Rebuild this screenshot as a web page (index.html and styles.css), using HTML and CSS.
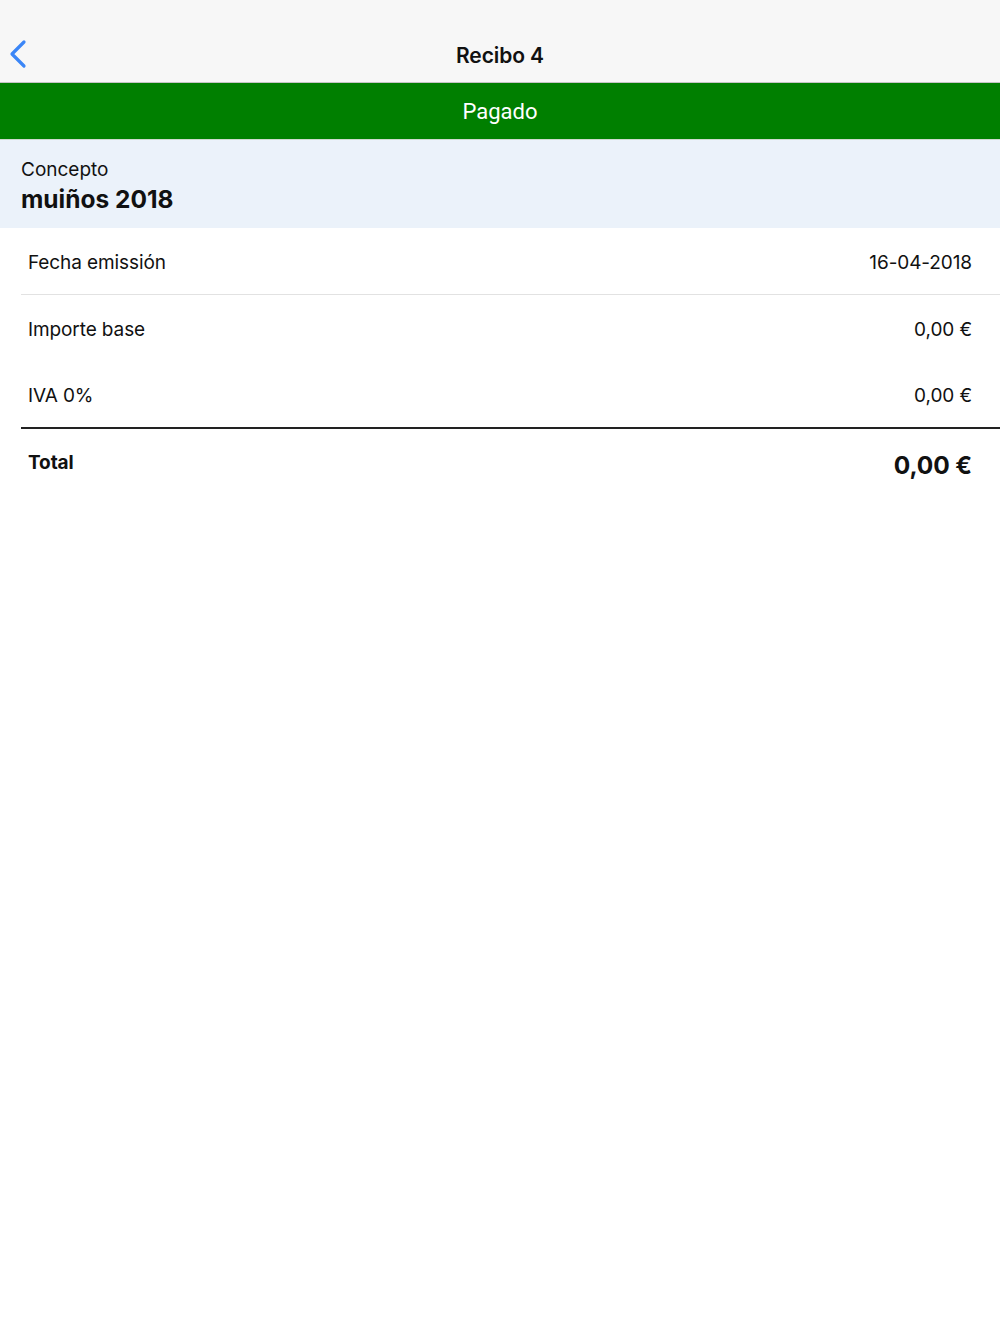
FILE: index.html
```html
<!DOCTYPE html>
<html lang="es">
<head>
    <meta charset="UTF-8">
    <meta name="viewport" content="width=device-width, initial-scale=1.0">
    <title>Recibo 4</title>
    <link rel="stylesheet" href="styles.css">
</head>
<body>
    <header class="navbar">
        <button class="back-btn" aria-label="Volver">
            <svg width="20" height="30" viewBox="0 0 20 30">
                <polyline points="15,3 3,15 15,27" fill="none" stroke="#3b86f7" stroke-width="3.2" stroke-linecap="round" stroke-linejoin="round"/>
            </svg>
        </button>
        <h1 class="navbar-title">Recibo 4</h1>
    </header>
    <div class="status status-paid">Pagado</div>
    <section class="concept">
        <div class="concept-label">Concepto</div>
        <div class="concept-value">muiños 2018</div>
    </section>
    <main class="details">
        <div class="row row-divided">
            <span>Fecha emissión</span>
            <span>16-04-2018</span>
        </div>
        <div class="row">
            <span>Importe base</span>
            <span>0,00 €</span>
        </div>
        <div class="row row-last">
            <span>IVA 0%</span>
            <span>0,00 €</span>
        </div>
        <div class="row row-total">
            <span class="total-label">Total</span>
            <span class="total-value">0,00 €</span>
        </div>
    </main>
</body>
</html>
```

FILE: styles.css
```css
:root {
    --nav: #f7f7f7;
    --nav-border: #c4c4c4;
    --green: #007f00;
    --concept: #ebf2fa;
    --font: #111;
    --divider: #e2e2e2;
}

*,
*::before,
*::after {
    box-sizing: border-box;
    padding: 0;
    margin: 0;
}

body {
    background-color: #fff;
    color: var(--font);
    font-family: 'Inter', 'Roboto', sans-serif;
}

button {
    border: none;
    background: none;
    cursor: pointer;
}

.navbar {
    position: relative;
    display: flex;
    align-items: center;
    justify-content: center;
    height: 83px;
    padding-top: 28px;
    background-color: var(--nav);
    border-bottom: 1px solid var(--nav-border);
}

.back-btn {
    position: absolute;
    left: 9px;
    top: 39px;
    display: flex;
}

.navbar-title {
    font-size: 21px;
    font-weight: 600;
    letter-spacing: -0.1px;
}

.status {
    display: flex;
    align-items: center;
    justify-content: center;
    height: 57px;
    padding-top: 1px;
    font-family: 'Roboto', sans-serif;
    font-size: 22px;
    color: #fff;
}

.status-paid {
    background-color: var(--green);
    border-bottom: 1px solid #cfd9cf;
}

.concept {
    height: 88px;
    padding: 18px 21px 0;
    background-color: var(--concept);
}

.concept-label {
    font-size: 19px;
    line-height: 24px;
}

.concept-value {
    font-size: 24.5px;
    font-weight: 700;
    line-height: 34px;
    letter-spacing: 0;
}

.details {
    padding-left: 21px;
}

.row {
    display: flex;
    justify-content: space-between;
    align-items: center;
    height: 67px;
    padding: 2px 28px 0 7px;
    font-size: 19px;
    letter-spacing: -0.1px;
}

.row-divided {
    border-bottom: 1px solid var(--divider);
}

.row-last {
    border-bottom: 2px solid #222;
}

.row-total {
    align-items: flex-start;
    padding-top: 22px;
}

.total-label {
    font-weight: 700;
}

.total-value {
    font-size: 24.5px;
    font-weight: 700;
    margin-top: -1px;
}
```
